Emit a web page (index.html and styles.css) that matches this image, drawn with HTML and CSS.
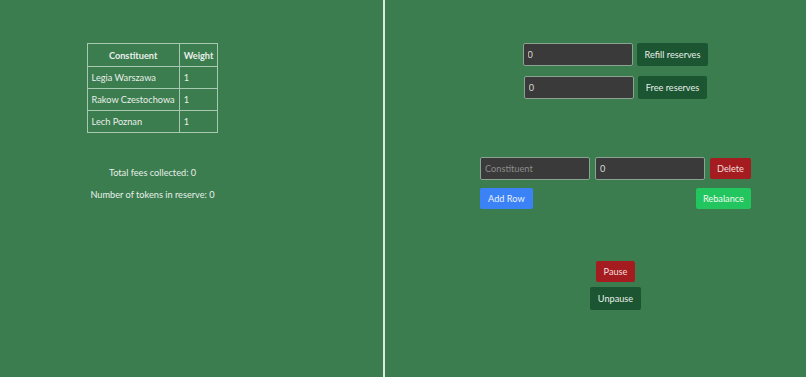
FILE: index.html
```html
<!DOCTYPE html>
<html>
<head>
<meta charset="utf-8">
<link rel="stylesheet" href="styles.css">
</head>
<body>
<div class="app">
  <div class="panel left">
    <table class="tbl">
      <thead>
        <tr><th class="c1">Constituent</th><th class="c2">Weight</th></tr>
      </thead>
      <tbody>
        <tr><td>Legia Warszawa</td><td>1</td></tr>
        <tr><td>Rakow Czestochowa</td><td>1</td></tr>
        <tr><td>Lech Poznan</td><td>1</td></tr>
      </tbody>
    </table>
    <p class="stat first">Total fees collected: 0</p>
    <p class="stat">Number of tokens in reserve: 0</p>
  </div>
  <div class="divider"></div>
  <div class="panel right">
    <div class="row r1">
      <input class="inp" type="text" value="0">
      <button class="btn dark">Refill reserves</button>
    </div>
    <div class="row r2">
      <input class="inp" type="text" value="0">
      <button class="btn dark">Free reserves</button>
    </div>
    <div class="editor">
      <div class="row r3">
        <input class="inp" type="text" placeholder="Constituent">
        <input class="inp" type="text" value="0">
        <button class="btn red del">Delete</button>
      </div>
      <div class="row r4">
        <button class="btn blue">Add Row</button>
        <button class="btn green">Rebalance</button>
      </div>
    </div>
    <div class="pausebox">
      <button class="btn red">Pause</button>
      <button class="btn dark">Unpause</button>
    </div>
  </div>
</div>
</body>
</html>
```
FILE: styles.css
```css
html, body {
  margin: 0;
  padding: 0;
  height: 100%;
  background: #3b7d4f;
  font-family: "Lato", "Noto Sans", sans-serif;
  color: #e9efea;
}
.app {
  display: flex;
  height: 377px;
}
.panel {
  display: flex;
  flex-direction: column;
  align-items: center;
}
.left {
  width: 305px;
  padding-right: 78px;
  padding-top: 43px;
}
.divider {
  width: 2px;
  background: #dfe9e2;
}
.right {
  flex: 1;
  padding-left: 40px;
  padding-top: 43px;
}
.tbl {
  border-collapse: collapse;
  font-size: 9.2px;
  white-space: nowrap;
}
.tbl th, .tbl td {
  border: 1px solid #a9c8b1;
  padding: 0 4px;
  text-align: left;
  font-weight: normal;
}
.tbl th {
  height: 22px;
  font-weight: bold;
  text-align: center;
}
.tbl th.c1 { width: 81px; }
.tbl th.c2 { width: 27px; }
.tbl td {
  height: 21px;
}
.stat {
  margin: 0;
  font-size: 9.2px;
  line-height: 12px;
}
.stat.first { margin-top: 34px; }
.stat + .stat { margin-top: 10px; }
.row {
  display: flex;
  gap: 4px;
  align-items: center;
}
.r2 { margin-top: 10px; }
.inp {
  box-sizing: border-box;
  width: 110px;
  height: 23px;
  background: #3a3a3a;
  border: 1px solid #8aa392;
  border-radius: 2px;
  color: #d7d7d7;
  font-family: inherit;
  font-size: 9.2px;
  padding: 0 4px;
  margin: 0;
  outline: none;
}
.inp::placeholder { color: #8c8c8c; }
.btn {
  box-sizing: border-box;
  height: 23px;
  border: none;
  border-radius: 2px;
  font-family: inherit;
  font-size: 9.2px;
  color: #e8efe9;
  padding: 0 8px;
  margin: 0;
  white-space: nowrap;
}
.dark { background: #1b5531; }
.red { background: #a41c1f; color: #f2dede; }
.blue { background: #3b82f6; color: #eaf1ff; height: 21px; }
.green { background: #22c55e; color: #eefcf2; height: 21px; padding: 0 7px; }
.del { height: 21px; padding: 0 7px; }
.editor {
  margin-top: 58px;
  display: flex;
  flex-direction: column;
}
.r3 { gap: 5px; }
.r4 {
  margin-top: 8px;
  justify-content: space-between;
}
.pausebox {
  margin-top: 52px;
  display: flex;
  flex-direction: column;
  align-items: center;
  gap: 5px;
}
.pausebox .red { height: 21px; }
```
